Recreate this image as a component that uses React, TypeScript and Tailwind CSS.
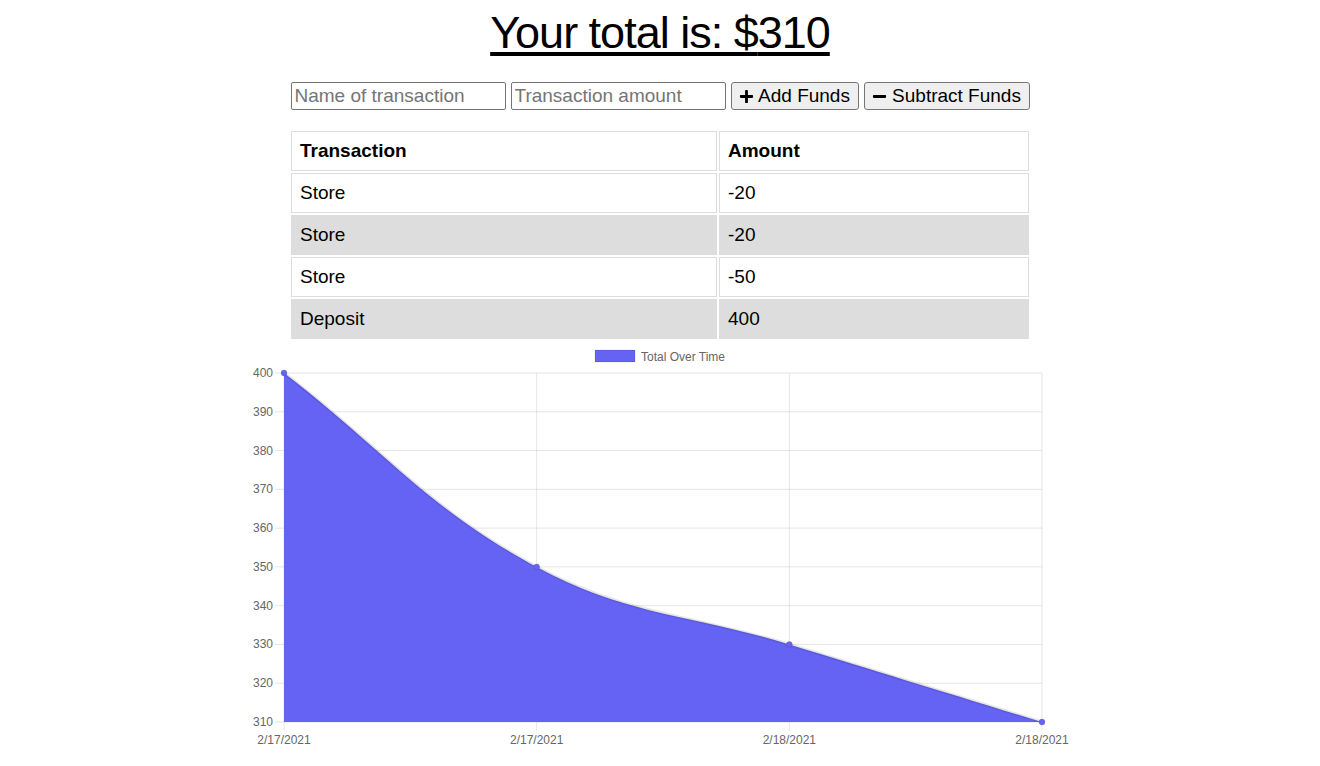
import { FaPlus, FaMinus } from "react-icons/fa";

type Tx = { name: string; value: number };

const transactions: Tx[] = [
  { name: "Store", value: -20 },
  { name: "Store", value: -20 },
  { name: "Store", value: -50 },
  { name: "Deposit", value: 400 },
];

// chart geometry (page coordinates)
const left = 284;
const right = 1042;
const top = 373;
const bottom = 722;
const yMin = 310;
const yMax = 400;
const labels = ["2/17/2021", "2/17/2021", "2/18/2021", "2/18/2021"];
const totals = [400, 350, 330, 310];

type Pt = { x: number; y: number };

function toPt(i: number, v: number): Pt {
  return {
    x: left + ((right - left) * i) / (totals.length - 1),
    y: bottom - ((v - yMin) / (yMax - yMin)) * (bottom - top),
  };
}

function curvePath(pts: Pt[], t = 0.4) {
  const cps = pts.map((cur, i) => {
    const prev = pts[i - 1] ?? cur;
    const next = pts[i + 1] ?? cur;
    const d01 = Math.hypot(cur.x - prev.x, cur.y - prev.y);
    const d12 = Math.hypot(next.x - cur.x, next.y - cur.y);
    let s01 = d01 / (d01 + d12);
    let s12 = d12 / (d01 + d12);
    if (isNaN(s01)) s01 = 0;
    if (isNaN(s12)) s12 = 0;
    const fa = t * s01;
    const fb = t * s12;
    return {
      p: { x: cur.x - fa * (next.x - prev.x), y: cur.y - fa * (next.y - prev.y) },
      n: { x: cur.x + fb * (next.x - prev.x), y: cur.y + fb * (next.y - prev.y) },
    };
  });
  let d = `M ${pts[0].x} ${pts[0].y}`;
  for (let i = 1; i < pts.length; i++) {
    const a = cps[i - 1].n;
    const b = cps[i].p;
    d += ` C ${a.x} ${a.y} ${b.x} ${b.y} ${pts[i].x} ${pts[i].y}`;
  }
  return d;
}

function Chart() {
  const pts = totals.map((v, i) => toPt(i, v));
  const line = curvePath(pts);
  const fill = `${line} L ${right} ${bottom} L ${left} ${bottom} Z`;
  const ticks = [400, 390, 380, 370, 360, 350, 340, 330, 320, 310];
  const grid = "rgba(0,0,0,0.1)";
  const purple = "#6563f4";

  return (
    <svg width={830} height={420} viewBox="245 341 830 420" className="block mx-auto">
      <g fontFamily="'Liberation Sans', Arial, sans-serif" fontSize={12} fill="#666">
        {/* legend */}
        <rect x={595} y={350} width={40} height={12} fill={purple} stroke={grid} strokeWidth={1} />
        <text x={641} y={360.5}>Total Over Time</text>

        {/* horizontal grid + y labels */}
        {ticks.map((v) => {
          const y = toPt(0, v).y;
          return (
            <g key={v}>
              <line x1={275} x2={right} y1={y} y2={y} stroke={grid} strokeWidth={1} />
              <text x={273} y={y + 4} textAnchor="end">
                {v}
              </text>
            </g>
          );
        })}

        {/* vertical grid + x labels */}
        {pts.map((p, i) => (
          <g key={i}>
            <line x1={p.x} x2={p.x} y1={top} y2={731} stroke={grid} strokeWidth={1} />
            <text x={p.x} y={744} textAnchor="middle">
              {labels[i]}
            </text>
          </g>
        ))}

        {/* area */}
        <path d={fill} fill={purple} />
        <path d={line} fill="none" stroke={grid} strokeWidth={3} />
        {pts.map((p, i) => (
          <circle key={i} cx={p.x} cy={p.y} r={3} fill={purple} stroke={grid} strokeWidth={1} />
        ))}
      </g>
    </svg>
  );
}

export default function App() {
  const total = transactions.reduce((s, t) => s + t.value, 0);

  return (
    <div className="min-h-[766px] bg-white text-black font-['Liberation_Sans',Arial,sans-serif]">
      <h1 className="pt-[7px] text-center text-[45px] leading-[52px] tracking-[-1px] underline underline-offset-[4px]">
        Your total is: ${total}
      </h1>

      {/* form */}
      <div className="mt-[23px] flex justify-center gap-[5px] text-[19px]">
        <input
          placeholder="Name of transaction"
          className="w-[215px] h-[28px] px-[3px] border border-[#767676] rounded-[2px] placeholder:text-[#757575] outline-none"
        />
        <input
          placeholder="Transaction amount"
          className="w-[215px] h-[28px] px-[3px] border border-[#767676] rounded-[2px] placeholder:text-[#757575] outline-none"
        />
        <button className="h-[28px] w-[128px] flex items-center justify-center gap-[4px] bg-[#efefef] border border-[#767676] rounded-[3px]">
          <FaPlus size={15} />
          Add Funds
        </button>
        <button className="h-[28px] w-[166px] flex items-center justify-center gap-[5px] bg-[#efefef] border border-[#767676] rounded-[3px]">
          <FaMinus size={15} />
          Subtract Funds
        </button>
      </div>

      {/* transactions */}
      <table className="mx-auto mt-[19px] w-[742px] border-separate border-spacing-[2px] text-[19px]">
        <thead>
          <tr>
            <th className="w-[426px] h-[40px] px-[8px] text-left font-bold border border-[#ddd]">Transaction</th>
            <th className="h-[40px] px-[8px] text-left font-bold border border-[#ddd]">Amount</th>
          </tr>
        </thead>
        <tbody>
          {transactions.map((t, i) => (
            <tr key={i} className={i % 2 === 1 ? "bg-[#ddd]" : "bg-white"}>
              <td className="h-[40px] px-[8px] border border-[#ddd]">{t.name}</td>
              <td className="h-[40px] px-[8px] border border-[#ddd]">{t.value}</td>
            </tr>
          ))}
        </tbody>
      </table>

      <Chart />
    </div>
  );
}
